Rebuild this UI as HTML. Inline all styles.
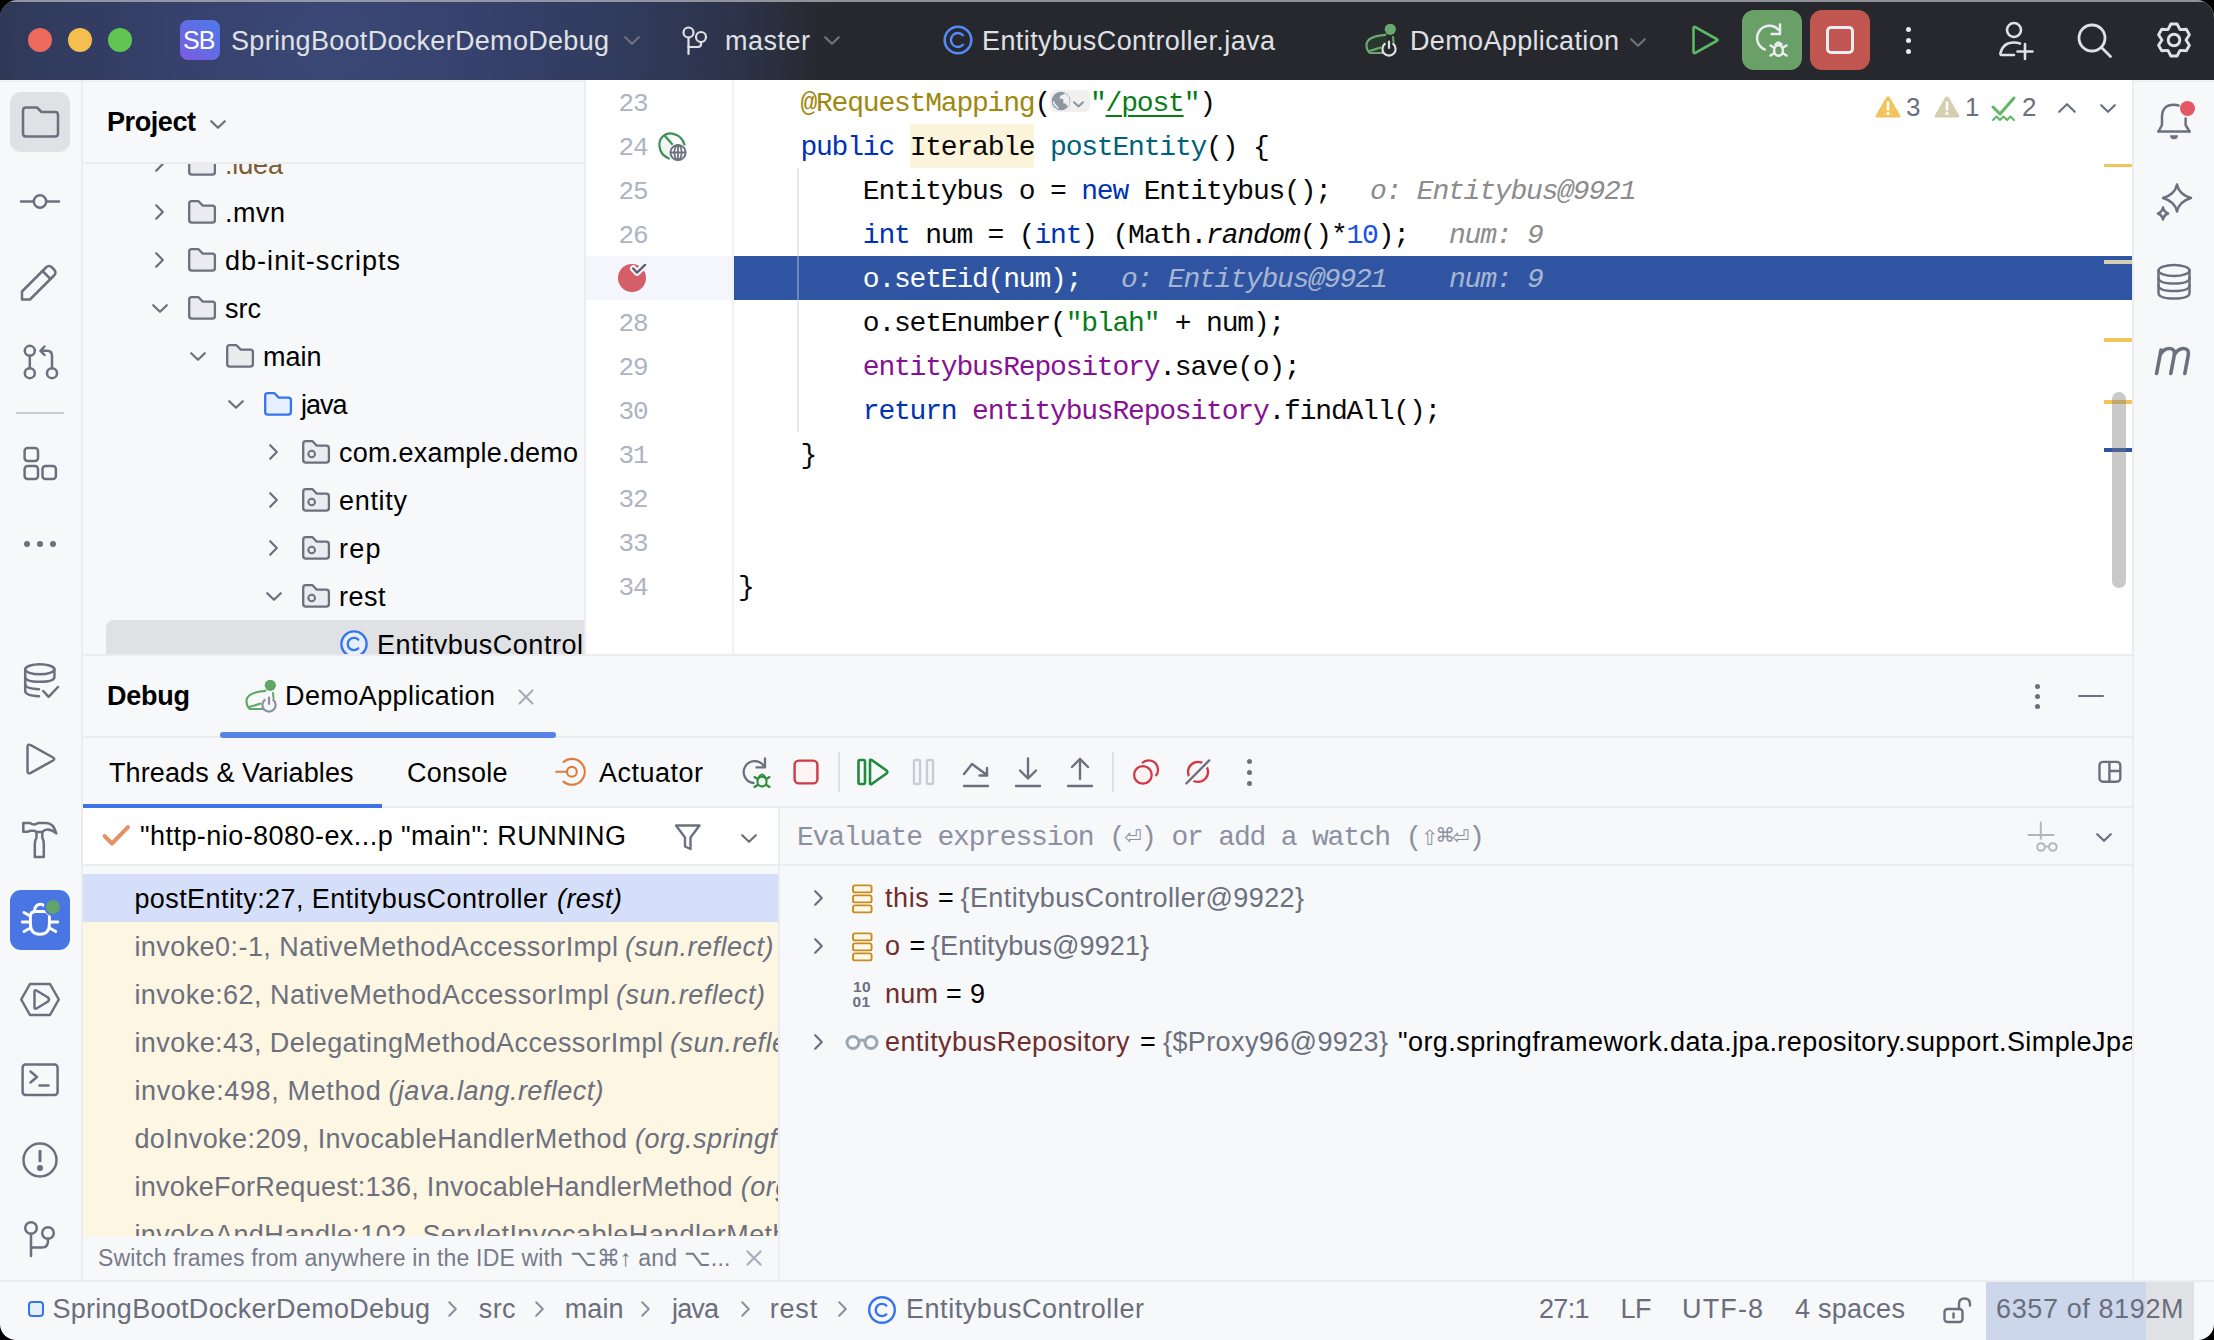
<!DOCTYPE html>
<html><head><meta charset="utf-8"><title>IDE</title>
<style>
*{margin:0;padding:0;box-sizing:border-box}
html,body{width:2214px;height:1340px;overflow:hidden;background:#000}
body{font-family:"Liberation Sans",sans-serif;position:relative}
.a{position:absolute}
.win{position:absolute;left:0;top:0;width:2214px;height:1340px;border-radius:18px 18px 16px 16px;overflow:hidden;background:#f7f8fa}
.t{position:absolute;white-space:nowrap}
svg{position:absolute;overflow:visible}
.clip{position:absolute;overflow:hidden}
</style></head>
<body>
<div class="win">
<div class="a" style="left:0px;top:0px;width:2214px;height:80px;background:#27282e;"></div>
<div class="a" style="left:0px;top:0px;width:1100px;height:80px;background:radial-gradient(circle at 330px 40px,#3b4774 0px,#37426f 130px,#313b5d 290px,#2c3349 410px,#28292f 490px,rgba(39,40,46,0) 540px);"></div>
<div class="a" style="left:0px;top:0px;width:2214px;height:2px;background:rgba(170,172,180,.8);"></div>
<div class="a" style="left:28px;top:28px;width:24px;height:24px;background:#ec6a5e;border-radius:50%"></div>
<div class="a" style="left:68px;top:28px;width:24px;height:24px;background:#f4bf4f;border-radius:50%"></div>
<div class="a" style="left:108px;top:28px;width:24px;height:24px;background:#61c554;border-radius:50%"></div>
<div class="a" style="left:180px;top:20px;width:40px;height:40px;background:linear-gradient(45deg,#7c5be0,#4a7ce9);border-radius:8px"></div>
<div class="t" id="t1" style="left:183px;top:26.88px;font-size:25px;line-height:27.93px;color:#fff;letter-spacing:-0.8px;">SB</div>
<div class="t" id="projname" style="left:231px;top:25.56px;font-size:27px;line-height:30.16px;color:#dfe1e5;letter-spacing:0.305px;">SpringBootDockerDemoDebug</div>
<svg style="left:624px;top:36px;" width="16" height="9" viewBox="0 0 16 9"><path d="M1.2 1.2 L8.0 7.8 L14.8 1.2" fill="none" stroke="#6f737a" stroke-width="2.2" stroke-linecap="round" stroke-linejoin="round"/></svg>
<svg style="left:676px;top:24px;" width="36" height="34" viewBox="0 0 36 34"><g fill="none" stroke="#dfe1e5" stroke-width="2.2" stroke-linecap="round"><circle cx="12.5" cy="8.5" r="5"/><circle cx="25" cy="13" r="5"/><path d="M12.5 13.5 V30"/><path d="M25 18 V20 Q25 23 22 23 H12.5"/></g></svg>
<div class="t" id="master" style="left:725px;top:25.56px;font-size:27px;line-height:30.16px;color:#dfe1e5;letter-spacing:0.495px;">master</div>
<svg style="left:824px;top:36px;" width="16" height="9" viewBox="0 0 16 9"><path d="M1.2 1.2 L8.0 7.8 L14.8 1.2" fill="none" stroke="#6f737a" stroke-width="2.2" stroke-linecap="round" stroke-linejoin="round"/></svg>
<svg style="left:942px;top:24px;" width="32" height="32" viewBox="0 0 32 32"><circle cx="16" cy="16" r="13.3" fill="none" stroke="#548af7" stroke-width="2.6"/><path d="M21 11.2 A7 7 0 1 0 21 20.8" fill="none" stroke="#548af7" stroke-width="2.4" stroke-linecap="round"/></svg>
<div class="t" id="fname" style="left:982px;top:25.56px;font-size:27px;line-height:30.16px;color:#dfe1e5;letter-spacing:0.407px;">EntitybusController.java</div>
<svg style="left:1364px;top:22px;" width="40" height="40" viewBox="0 0 40 40"><path d="M21 13 C12 13.5 2.5 16 2.5 23 C2.5 27 4 29.5 6 31 L19 31 L24 21 Z" fill="#28382c"/><path d="M21.5 12.8 C12 13.5 2.5 16 2.5 23 C2.5 27 4 29.5 6 31 H18.5" fill="none" stroke="#6aa872" stroke-width="2.2" stroke-linecap="round"/><path d="M5 29 Q11 27.5 16.5 25.5" fill="none" stroke="#6aa872" stroke-width="2" stroke-linecap="round"/><circle cx="26.3" cy="7.3" r="5.6" fill="#6aa872"/><path d="M29 15 L29.5 20" stroke="#6aa872" stroke-width="2" stroke-linecap="round"/><path d="M20.76 21.94 A6.6 6.6 0 1 0 29.24 21.94" fill="none" stroke="#e0e1e4" stroke-width="2.2" stroke-linecap="round"/><path d="M25 19.5 V26" stroke="#e0e1e4" stroke-width="2.2" stroke-linecap="round"/></svg>
<div class="t" id="demoapp" style="left:1410px;top:25.56px;font-size:27px;line-height:30.16px;color:#dfe1e5;letter-spacing:0.351px;">DemoApplication</div>
<svg style="left:1630px;top:38px;" width="16" height="9" viewBox="0 0 16 9"><path d="M1.2 1.2 L8.0 7.8 L14.8 1.2" fill="none" stroke="#6f737a" stroke-width="2.2" stroke-linecap="round" stroke-linejoin="round"/></svg>
<svg style="left:1690px;top:24px;" width="32" height="32" viewBox="0 0 32 32"><path d="M3.5 4.5 Q3.5 2 5.8 3.3 L26.5 15 Q28.5 16 26.5 17 L5.8 28.7 Q3.5 30 3.5 27.5 Z" fill="none" stroke="#5fb865" stroke-width="2.6" stroke-linejoin="round"/></svg>
<div class="a" style="left:1742px;top:10px;width:60px;height:60px;background:#6a9f67;border-radius:12px"></div>
<svg style="left:1742px;top:10px;" width="60" height="60" viewBox="0 0 60 60"><g fill="none" stroke="#ebecf0" stroke-width="2.5" stroke-linecap="round" stroke-linejoin="round"><path d="M22.8 39.5 A12.3 12.3 0 1 1 36.5 19.8"/><path d="M38 14.5 V24 H29.5"/><ellipse cx="36.5" cy="40.5" rx="4.4" ry="5.3"/><path d="M33.5 34.5 Q36.5 30.5 39.5 34.5"/><path d="M28.5 35.5 L31.8 37.3 M44.5 35.5 L41.2 37.3 M28.5 45.5 L31.8 43.5 M44.5 45.5 L41.2 43.5"/></g></svg>
<div class="a" style="left:1810px;top:10px;width:60px;height:60px;background:#c0564f;border-radius:12px"></div>
<div class="a" style="left:1826px;top:26px;width:28px;height:28px;background:transparent;border:3px solid #ebecf0;border-radius:5px"></div>
<div class="a" style="left:1905.5px;top:26.5px;width:5px;height:5px;background:#ebecf0;border-radius:50%"></div>
<div class="a" style="left:1905.5px;top:37.5px;width:5px;height:5px;background:#ebecf0;border-radius:50%"></div>
<div class="a" style="left:1905.5px;top:48.5px;width:5px;height:5px;background:#ebecf0;border-radius:50%"></div>
<svg style="left:1994px;top:18px;" width="44" height="44" viewBox="0 0 44 44"><g fill="none" stroke="#dfe1e5" stroke-width="2.6" stroke-linecap="round"><circle cx="20" cy="12" r="7"/><path d="M20 37 H7.5 Q6 37 6.5 35 Q9 24.5 20 24.5 Q23 24.5 26 25.5"/><path d="M31 26 V41 M23.5 33.5 H38.5"/></g></svg>
<svg style="left:2072px;top:20px;" width="44" height="44" viewBox="0 0 44 44"><g fill="none" stroke="#dfe1e5" stroke-width="2.8" stroke-linecap="round"><circle cx="20" cy="18" r="13"/><path d="M29.5 27.5 L38.5 36.5"/></g></svg>
<svg style="left:2152px;top:18px;" width="44" height="44" viewBox="0 0 44 44"><g fill="none" stroke="#dfe1e5" stroke-width="2.9" stroke-linejoin="round"><path d="M16.00 11.61 L18.89 6.00 L25.11 6.00 L28.00 11.61 L34.30 11.31 L37.41 16.69 L34.00 22.00 L37.41 27.31 L34.30 32.69 L28.00 32.39 L25.11 38.00 L18.89 38.00 L16.00 32.39 L9.70 32.69 L6.59 27.31 L10.00 22.00 L6.59 16.69 L9.70 11.31 Z"/><circle cx="22" cy="22" r="5.8"/></g></svg>
<div class="a" style="left:0px;top:80px;width:2214px;height:1px;background:#f3f4f6;"></div>
<div class="a" style="left:0px;top:81px;width:2214px;height:1px;background:#ebecf0;"></div>
<div class="a" style="left:81px;top:80px;width:2px;height:1201px;background:#ebecf0;"></div>
<div class="a" style="left:584px;top:80px;width:2px;height:575px;background:#ebecf0;"></div>
<div class="a" style="left:586px;top:80px;width:1546px;height:575px;background:#fff;"></div>
<div class="a" style="left:2132px;top:80px;width:2px;height:1201px;background:#ebecf0;"></div>
<div class="a" style="left:83px;top:654px;width:2049px;height:2px;background:#ebecf0;"></div>
<div class="a" style="left:83px;top:736px;width:2049px;height:2px;background:#ebecf0;"></div>
<div class="a" style="left:83px;top:806px;width:2049px;height:2px;background:#ebecf0;"></div>
<div class="a" style="left:83px;top:808px;width:695px;height:56px;background:#fff;"></div>
<div class="a" style="left:83px;top:864px;width:2049px;height:2px;background:#ebecf0;"></div>
<div class="a" style="left:778px;top:808px;width:2px;height:473px;background:#ebecf0;"></div>
<div class="a" style="left:0px;top:1280px;width:2214px;height:2px;background:#ebecf0;"></div>
<div class="a" style="left:10px;top:92px;width:60px;height:60px;background:#dfe1e5;border-radius:11px"></div>
<svg style="left:18px;top:100px;" width="44" height="44" viewBox="0 0 44 44"><path d="M5 10.5 Q5 7.5 8 7.5 H19 L23.5 12 H37 Q40 12 40 15 V33.5 Q40 36.5 37 36.5 H8 Q5 36.5 5 33.5 Z" fill="none" stroke="#6c707e" stroke-width="2.5" stroke-linecap="round" stroke-linejoin="round"/></svg>
<svg style="left:18px;top:180px;" width="44" height="44" viewBox="0 0 44 44"><g fill="none" stroke="#6c707e" stroke-width="2.5" stroke-linecap="round" stroke-linejoin="round"><circle cx="22" cy="21.5" r="6.2"/><path d="M3 21.5 H15.8 M28.2 21.5 H41"/></g></svg>
<svg style="left:18px;top:260px;" width="44" height="44" viewBox="0 0 44 44"><g fill="none" stroke="#6c707e" stroke-width="2.5" stroke-linecap="round" stroke-linejoin="round"><path d="M4 38.5 V31.5 L28 7.5 Q31 4.5 34 7.5 L36 9.5 Q39 12.5 36 15.5 L12 39.5 H4 Z"/><path d="M24.5 11 L32.5 19"/></g></svg>
<svg style="left:18px;top:340px;" width="44" height="44" viewBox="0 0 44 44"><g fill="none" stroke="#6c707e" stroke-width="2.5" stroke-linecap="round" stroke-linejoin="round"><circle cx="11.8" cy="10.8" r="5"/><circle cx="11.8" cy="33.2" r="5"/><circle cx="34" cy="33.2" r="5"/><path d="M11.8 15.8 V28.2"/><path d="M34 28.2 V16 Q34 10.8 29 10.8 H23"/><path d="M26.5 6.5 L22.5 10.8 L26.5 15"/></g></svg>
<div class="a" style="left:16px;top:412px;width:48px;height:2px;background:#c9ccd6;"></div>
<svg style="left:18px;top:440px;" width="44" height="44" viewBox="0 0 44 44"><g fill="none" stroke="#6c707e" stroke-width="2.5" stroke-linecap="round" stroke-linejoin="round"><rect x="6.6" y="8" width="13.4" height="13" rx="3"/><rect x="6.6" y="26" width="13.4" height="13" rx="3"/><rect x="24.5" y="26" width="13.4" height="13" rx="3"/></g></svg>
<div class="a" style="left:24px;top:540.7px;width:6px;height:6px;background:#6c707e;border-radius:50%"></div>
<div class="a" style="left:37px;top:540.7px;width:6px;height:6px;background:#6c707e;border-radius:50%"></div>
<div class="a" style="left:50px;top:540.7px;width:6px;height:6px;background:#6c707e;border-radius:50%"></div>
<svg style="left:18px;top:658px;" width="44" height="44" viewBox="0 0 44 44"><g fill="none" stroke="#6c707e" stroke-width="2.5" stroke-linecap="round" stroke-linejoin="round"><ellipse cx="21.8" cy="11.3" rx="14.6" ry="5"/><path d="M7.2 11.3 V33 Q7.2 37.6 21 38.2"/><path d="M36.4 11.3 V19 Q36.4 23.8 21.8 23.8 Q7.2 23.8 7.2 19"/><path d="M7.2 26.2 Q7.2 30.6 21 31.2"/><path d="M25.2 33 L30.6 38.8 L40 29"/></g></svg>
<svg style="left:18px;top:738px;" width="44" height="44" viewBox="0 0 44 44"><path d="M9.5 9 Q9.5 5.5 12.8 7.2 L35 19.5 Q37.5 21 35 22.5 L12.8 34.8 Q9.5 36.5 9.5 33 Z" fill="none" stroke="#6c707e" stroke-width="2.5" stroke-linecap="round" stroke-linejoin="round"/></svg>
<svg style="left:18px;top:818px;" width="44" height="44" viewBox="0 0 44 44"><g fill="none" stroke="#6c707e" stroke-width="2.5" stroke-linecap="round" stroke-linejoin="round"><path d="M5.3 5 H12 Q14 6.5 16 6.5 Q18 6.5 20 5 H28 Q35.5 5 38.3 15.4 Q34 11.5 29.5 11.5 Q26.5 11.5 24.3 14 H18.5 Q17 12.8 15.5 12.8 H12 Q10.5 13.8 9 13.8 H5.3 Z"/><path d="M18.5 14 V19.5 Q16.8 22.5 16.8 26.5 V39 H25.8 V26.5 Q25.8 22.5 24.3 19.5 V14"/></g></svg>
<div class="a" style="left:10px;top:890px;width:60px;height:60px;background:#4a76e4;border-radius:11px"></div>
<svg style="left:18px;top:898px;" width="44" height="44" viewBox="0 0 44 44"><g fill="none" stroke="#fff" stroke-width="2.9" stroke-linecap="round" stroke-linejoin="round"><path d="M31.4 18.5 V25.5 Q31.4 36.3 21.9 36.3 Q12.4 36.3 12.4 25.5 V18.5 Q12.4 13.5 17.2 13.5 H26.2 Q28.5 13.5 30 15.5"/><path d="M16.6 12 Q17.6 6.2 22.5 6.2 Q24.6 6.2 25.8 7.4"/><path d="M4.3 24 H12.4 M31.4 24 H39.7 M6 14.5 L12.2 18 M6 33.5 L12.4 30 M37.8 33.5 L31.6 30"/></g></svg>
<div class="a" style="left:45.8px;top:899.5px;width:14px;height:14px;background:#62a36c;border-radius:50%;box-shadow:0 0 0 2px #4a76e4"></div>
<svg style="left:18px;top:978px;" width="44" height="44" viewBox="0 0 44 44"><g fill="none" stroke="#6c707e" stroke-width="2.5" stroke-linecap="round" stroke-linejoin="round"><path d="M12 6 H32 L40.8 21.5 L32 37 H12 L3.2 21.5 Z"/><path d="M16.5 13.5 Q16.5 11.5 18.5 12.5 L30 19.5 Q32 21.5 30 23.5 L18.5 30.5 Q16.5 31.5 16.5 29.5 Z"/></g></svg>
<svg style="left:18px;top:1058px;" width="44" height="44" viewBox="0 0 44 44"><g fill="none" stroke="#6c707e" stroke-width="2.5" stroke-linecap="round" stroke-linejoin="round"><rect x="4.6" y="6.5" width="35" height="30.5" rx="3"/><path d="M12.5 13.5 L19 19 L12.5 24.5"/><path d="M21.5 27.5 H30.5"/></g></svg>
<svg style="left:18px;top:1138px;" width="44" height="44" viewBox="0 0 44 44"><g fill="none" stroke="#6c707e" stroke-width="2.5" stroke-linecap="round" stroke-linejoin="round"><circle cx="22" cy="22" r="16.5"/><path d="M22 13.2 V22.8" stroke-width="3"/></g></svg>
<div class="a" style="left:37.2px;top:1165.2px;width:5.6px;height:5.6px;background:#6c707e;border-radius:50%"></div>
<svg style="left:18px;top:1212px;" width="44" height="44" viewBox="0 0 44 44"><g fill="none" stroke="#6c707e" stroke-width="2.5" stroke-linecap="round" stroke-linejoin="round"><circle cx="13" cy="16" r="5.8"/><circle cx="30" cy="21" r="5.8"/><path d="M13 21.8 V44"/><path d="M30 26.8 V29 Q30 35.5 24 35.5 H13"/></g></svg>
<svg style="left:2152px;top:98px;" width="44" height="44" viewBox="0 0 44 44"><g fill="none" stroke="#6c707e" stroke-width="2.5" stroke-linecap="round" stroke-linejoin="round"><path d="M6.5 33.5 L10 27 V19 Q10 6.8 22 6.8 Q24.5 6.8 26.5 7.5"/><path d="M33.6 20.5 V27 L37.5 33.5"/><path d="M6.5 33.5 H37.5"/></g><path d="M18 37.2 A4 4 0 0 0 26 37.2 Z" fill="#6c707e"/></svg>
<div class="a" style="left:2179.7px;top:101px;width:15px;height:15px;background:#e55765;border-radius:50%"></div>
<svg style="left:2152px;top:178px;" width="44" height="44" viewBox="0 0 44 44"><g fill="none" stroke="#6c707e" stroke-width="2.5" stroke-linecap="round" stroke-linejoin="round"><path d="M25 6.5 Q27 16.5 39 20 Q27 23.5 25 33.5 Q23 23.5 11 20 Q23 16.5 25 6.5 Z"/><path d="M11 29.5 Q12 34 16 35.5 Q12 37 11 41.5 Q10 37 6 35.5 Q10 34 11 29.5 Z"/></g></svg>
<svg style="left:2152px;top:260px;" width="44" height="44" viewBox="0 0 44 44"><g fill="none" stroke="#6c707e" stroke-width="2.5" stroke-linecap="round" stroke-linejoin="round"><ellipse cx="22" cy="10.5" rx="15.5" ry="5.5"/><path d="M6.5 10.5 V33 Q6.5 38.5 22 38.5 Q37.5 38.5 37.5 33 V10.5"/><path d="M6.5 18 Q6.5 23.5 22 23.5 Q37.5 23.5 37.5 18"/><path d="M6.5 25.5 Q6.5 31 22 31 Q37.5 31 37.5 25.5"/></g></svg>
<svg style="left:2152px;top:338px;" width="44" height="44" viewBox="0 0 44 44"><path d="M4.6 35.5 L9 12 M8.2 17 Q11.5 10.5 17.5 10.5 Q23.5 10.5 22.2 17.5 L18.8 35.5 M22 17.5 Q25.5 10.5 31.5 10.5 Q37.5 10.5 36.2 17.5 L32.8 35.5" fill="none" stroke="#6c707e" stroke-width="3.6" stroke-linecap="round" stroke-linejoin="round"/></svg>
<div class="a" style="left:83px;top:162px;width:501px;height:2px;background:#ebecf0;"></div>
<div class="t" id="projhdr" style="left:107px;top:107.06px;font-size:27px;line-height:30.16px;color:#000;font-weight:700;letter-spacing:-0.424px;">Project</div>
<svg style="left:210px;top:120px;" width="16" height="9" viewBox="0 0 16 9"><path d="M1.2 1.2 L8.0 7.8 L14.8 1.2" fill="none" stroke="#6c707e" stroke-width="2.2" stroke-linecap="round" stroke-linejoin="round"/></svg>
<div class="clip" style="left:83px;top:164px;width:501px;height:490px"><div class="a" style="left:-83px;top:-164px;width:2214px;height:1340px">
<div class="a" style="left:106px;top:620px;width:478px;height:48px;background:#dfe1e5;border-radius:8px 0 0 8px"></div>
<svg style="left:154.5px;top:156px;" width="9" height="16" viewBox="0 0 9 16"><path d="M1.2 1.2 L7.8 8.0 L1.2 14.8" fill="none" stroke="#6c707e" stroke-width="2.2" stroke-linecap="round" stroke-linejoin="round"/></svg>
<svg style="left:188px;top:152px;" width="28" height="24" viewBox="0 0 28 24"><path d="M1.2 3.8 Q1.2 1.2 3.8 1.2 H10.5 L14.8 5.6 H24.3 Q26.9 5.6 26.9 8.2 V20 Q26.9 22.6 24.3 22.6 H3.8 Q1.2 22.6 1.2 20 Z" fill="#ebecf0" stroke="#6c707e" stroke-width="2.3" stroke-linejoin="round"/></svg>
<div class="t" id="tree0" style="left:225px;top:149.56px;font-size:27px;line-height:30.16px;color:#7d5c31;letter-spacing:-0.133px;">.idea</div>
<svg style="left:154.5px;top:204px;" width="9" height="16" viewBox="0 0 9 16"><path d="M1.2 1.2 L7.8 8.0 L1.2 14.8" fill="none" stroke="#6c707e" stroke-width="2.2" stroke-linecap="round" stroke-linejoin="round"/></svg>
<svg style="left:188px;top:200px;" width="28" height="24" viewBox="0 0 28 24"><path d="M1.2 3.8 Q1.2 1.2 3.8 1.2 H10.5 L14.8 5.6 H24.3 Q26.9 5.6 26.9 8.2 V20 Q26.9 22.6 24.3 22.6 H3.8 Q1.2 22.6 1.2 20 Z" fill="#ebecf0" stroke="#6c707e" stroke-width="2.3" stroke-linejoin="round"/></svg>
<div class="t" id="tree1" style="left:225px;top:197.56px;font-size:27px;line-height:30.16px;color:#000;letter-spacing:0.502px;">.mvn</div>
<svg style="left:154.5px;top:252px;" width="9" height="16" viewBox="0 0 9 16"><path d="M1.2 1.2 L7.8 8.0 L1.2 14.8" fill="none" stroke="#6c707e" stroke-width="2.2" stroke-linecap="round" stroke-linejoin="round"/></svg>
<svg style="left:188px;top:248px;" width="28" height="24" viewBox="0 0 28 24"><path d="M1.2 3.8 Q1.2 1.2 3.8 1.2 H10.5 L14.8 5.6 H24.3 Q26.9 5.6 26.9 8.2 V20 Q26.9 22.6 24.3 22.6 H3.8 Q1.2 22.6 1.2 20 Z" fill="#ebecf0" stroke="#6c707e" stroke-width="2.3" stroke-linejoin="round"/></svg>
<div class="t" id="tree2" style="left:225px;top:245.56px;font-size:27px;line-height:30.16px;color:#000;letter-spacing:1.033px;">db-init-scripts</div>
<svg style="left:152px;top:303.5px;" width="16" height="9" viewBox="0 0 16 9"><path d="M1.2 1.2 L8.0 7.8 L14.8 1.2" fill="none" stroke="#6c707e" stroke-width="2.2" stroke-linecap="round" stroke-linejoin="round"/></svg>
<svg style="left:188px;top:296px;" width="28" height="24" viewBox="0 0 28 24"><path d="M1.2 3.8 Q1.2 1.2 3.8 1.2 H10.5 L14.8 5.6 H24.3 Q26.9 5.6 26.9 8.2 V20 Q26.9 22.6 24.3 22.6 H3.8 Q1.2 22.6 1.2 20 Z" fill="#ebecf0" stroke="#6c707e" stroke-width="2.3" stroke-linejoin="round"/></svg>
<div class="t" id="tree3" style="left:225px;top:293.56px;font-size:27px;line-height:30.16px;color:#000;letter-spacing:0.004px;">src</div>
<svg style="left:190px;top:351.5px;" width="16" height="9" viewBox="0 0 16 9"><path d="M1.2 1.2 L8.0 7.8 L14.8 1.2" fill="none" stroke="#6c707e" stroke-width="2.2" stroke-linecap="round" stroke-linejoin="round"/></svg>
<svg style="left:226px;top:344px;" width="28" height="24" viewBox="0 0 28 24"><path d="M1.2 3.8 Q1.2 1.2 3.8 1.2 H10.5 L14.8 5.6 H24.3 Q26.9 5.6 26.9 8.2 V20 Q26.9 22.6 24.3 22.6 H3.8 Q1.2 22.6 1.2 20 Z" fill="#ebecf0" stroke="#6c707e" stroke-width="2.3" stroke-linejoin="round"/></svg>
<div class="t" id="tree4" style="left:263px;top:341.56px;font-size:27px;line-height:30.16px;color:#000;letter-spacing:-0.002px;">main</div>
<svg style="left:228px;top:399.5px;" width="16" height="9" viewBox="0 0 16 9"><path d="M1.2 1.2 L8.0 7.8 L14.8 1.2" fill="none" stroke="#6c707e" stroke-width="2.2" stroke-linecap="round" stroke-linejoin="round"/></svg>
<svg style="left:264px;top:392px;" width="28" height="24" viewBox="0 0 28 24"><path d="M1.2 3.8 Q1.2 1.2 3.8 1.2 H10.5 L14.8 5.6 H24.3 Q26.9 5.6 26.9 8.2 V20 Q26.9 22.6 24.3 22.6 H3.8 Q1.2 22.6 1.2 20 Z" fill="#e7effd" stroke="#3574f0" stroke-width="2.3" stroke-linejoin="round"/></svg>
<div class="t" id="tree5" style="left:301px;top:389.56px;font-size:27px;line-height:30.16px;color:#000;letter-spacing:-1.005px;">java</div>
<svg style="left:268.5px;top:444px;" width="9" height="16" viewBox="0 0 9 16"><path d="M1.2 1.2 L7.8 8.0 L1.2 14.8" fill="none" stroke="#6c707e" stroke-width="2.2" stroke-linecap="round" stroke-linejoin="round"/></svg>
<svg style="left:302px;top:440px;" width="28" height="24" viewBox="0 0 28 24"><path d="M1.2 3.8 Q1.2 1.2 3.8 1.2 H10.5 L14.8 5.6 H24.3 Q26.9 5.6 26.9 8.2 V20 Q26.9 22.6 24.3 22.6 H3.8 Q1.2 22.6 1.2 20 Z" fill="#ebecf0" stroke="#6c707e" stroke-width="2.3" stroke-linejoin="round"/><circle cx="9.7" cy="14" r="3.3" fill="none" stroke="#6c707e" stroke-width="2"/></svg>
<div class="t" id="tree6" style="left:339px;top:437.56px;font-size:27px;line-height:30.16px;color:#000;letter-spacing:0.227px;">com.example.demo</div>
<svg style="left:268.5px;top:492px;" width="9" height="16" viewBox="0 0 9 16"><path d="M1.2 1.2 L7.8 8.0 L1.2 14.8" fill="none" stroke="#6c707e" stroke-width="2.2" stroke-linecap="round" stroke-linejoin="round"/></svg>
<svg style="left:302px;top:488px;" width="28" height="24" viewBox="0 0 28 24"><path d="M1.2 3.8 Q1.2 1.2 3.8 1.2 H10.5 L14.8 5.6 H24.3 Q26.9 5.6 26.9 8.2 V20 Q26.9 22.6 24.3 22.6 H3.8 Q1.2 22.6 1.2 20 Z" fill="#ebecf0" stroke="#6c707e" stroke-width="2.3" stroke-linejoin="round"/><circle cx="9.7" cy="14" r="3.3" fill="none" stroke="#6c707e" stroke-width="2"/></svg>
<div class="t" id="tree7" style="left:339px;top:485.56px;font-size:27px;line-height:30.16px;color:#000;letter-spacing:0.693px;">entity</div>
<svg style="left:268.5px;top:540px;" width="9" height="16" viewBox="0 0 9 16"><path d="M1.2 1.2 L7.8 8.0 L1.2 14.8" fill="none" stroke="#6c707e" stroke-width="2.2" stroke-linecap="round" stroke-linejoin="round"/></svg>
<svg style="left:302px;top:536px;" width="28" height="24" viewBox="0 0 28 24"><path d="M1.2 3.8 Q1.2 1.2 3.8 1.2 H10.5 L14.8 5.6 H24.3 Q26.9 5.6 26.9 8.2 V20 Q26.9 22.6 24.3 22.6 H3.8 Q1.2 22.6 1.2 20 Z" fill="#ebecf0" stroke="#6c707e" stroke-width="2.3" stroke-linejoin="round"/><circle cx="9.7" cy="14" r="3.3" fill="none" stroke="#6c707e" stroke-width="2"/></svg>
<div class="t" id="tree8" style="left:339px;top:533.57px;font-size:27px;line-height:30.16px;color:#000;letter-spacing:1.246px;">rep</div>
<svg style="left:266px;top:591.5px;" width="16" height="9" viewBox="0 0 16 9"><path d="M1.2 1.2 L8.0 7.8 L14.8 1.2" fill="none" stroke="#6c707e" stroke-width="2.2" stroke-linecap="round" stroke-linejoin="round"/></svg>
<svg style="left:302px;top:584px;" width="28" height="24" viewBox="0 0 28 24"><path d="M1.2 3.8 Q1.2 1.2 3.8 1.2 H10.5 L14.8 5.6 H24.3 Q26.9 5.6 26.9 8.2 V20 Q26.9 22.6 24.3 22.6 H3.8 Q1.2 22.6 1.2 20 Z" fill="#ebecf0" stroke="#6c707e" stroke-width="2.3" stroke-linejoin="round"/><circle cx="9.7" cy="14" r="3.3" fill="none" stroke="#6c707e" stroke-width="2"/></svg>
<div class="t" id="tree9" style="left:339px;top:581.57px;font-size:27px;line-height:30.16px;color:#000;letter-spacing:0.498px;">rest</div>
<svg style="left:340px;top:630px;" width="28" height="28" viewBox="0 0 28 28"><circle cx="14" cy="14" r="12.6" fill="#e7effd" stroke="#3574f0" stroke-width="2.4"/><path d="M18.3 9.6 A6.2 6.2 0 1 0 18.3 18.4" fill="none" stroke="#3574f0" stroke-width="2.3" stroke-linecap="round"/></svg>
<div class="t" id="tree10" style="left:377px;top:629.57px;font-size:27px;line-height:30.16px;color:#000;letter-spacing:0.527px;">EntitybusControl</div>
</div></div>
<div class="clip" style="left:586px;top:80px;width:1546px;height:574px"><div class="a" style="left:-586px;top:-80px;width:2214px;height:1340px">
<div class="a" style="left:732px;top:80px;width:2px;height:574px;background:#f0f1f4;"></div>
<div class="a" style="left:586px;top:256px;width:146px;height:44px;background:#f4f6fb;"></div>
<div class="a" style="left:734px;top:256px;width:1398px;height:44px;background:#2f55a2;"></div>
<div class="a" style="left:796.5px;top:168px;width:2px;height:264px;background:#e8e9ed;"></div>
<div class="a" style="left:796.5px;top:256px;width:2px;height:44px;background:#6f86ba;"></div>
<div class="a" style="left:909.6px;top:124px;width:124.8px;height:44px;background:#fcf5dc;"></div>
<div class="a" style="left:1050px;top:90px;width:40px;height:22px;background:#f0f0f1;border-radius:6px"></div>
<svg style="left:1050px;top:90px;" width="40" height="22" viewBox="0 0 40 22"><circle cx="11" cy="11" r="9.3" fill="#8e96a0"/><path d="M14.5 3.2 Q17 4 18.5 6.5 Q20.5 10 19.5 14 Q18.5 17 17 16 L16 13.5 L13.5 13.5 L13.2 9 L9.5 8.5 L10.5 5.5 Q13 5.5 14.5 3.2 Z" fill="#f0f0f1"/><path d="M2.5 11.5 Q4 17 9.5 19.5 L8 17 Q5 14.5 4 11 Z" fill="#f0f0f1"/><path d="M24 12.2 L28.5 16.4 L33 12.2" fill="none" stroke="#8c959e" stroke-width="2" stroke-linecap="round" stroke-linejoin="round"/></svg>
<div class="t" id="t2" style="left:800.4px;top:88.38px;font-size:28px;line-height:31.72px;color:#000;font-family:'Liberation Mono',monospace;letter-spacing:-1.2px;"><span style="color:#9e880d;">@RequestMapping</span><span style="color:#080808;">(</span></div>
<div class="t" id="t3" style="left:1090.0px;top:88.38px;font-size:28px;line-height:31.72px;color:#000;font-family:'Liberation Mono',monospace;letter-spacing:-1.2px;"><span style="color:#067d17;">&quot;</span><span style="color:#067d17;text-decoration:underline;text-decoration-thickness:2px;text-underline-offset:4px;">/post</span><span style="color:#067d17;">&quot;</span><span style="color:#080808;">)</span></div>
<div class="t" id="t4" style="left:800.4px;top:132.38px;font-size:28px;line-height:31.72px;color:#000;font-family:'Liberation Mono',monospace;letter-spacing:-1.2px;"><span style="color:#0033b3;">public</span><span style="color:#080808;"> </span><span style="color:#080808;">Iterable</span><span style="color:#080808;"> </span><span style="color:#00627a;">postEntity</span><span style="color:#080808;">() {</span></div>
<div class="t" id="t5" style="left:862.8px;top:176.38px;font-size:28px;line-height:31.72px;color:#000;font-family:'Liberation Mono',monospace;letter-spacing:-1.2px;"><span style="color:#080808;">Entitybus o = </span><span style="color:#0033b3;">new</span><span style="color:#080808;"> Entitybus();</span></div>
<div class="t" id="t6" style="left:1370px;top:176.38px;font-size:28px;line-height:31.72px;color:#8c8c8c;font-style:italic;font-family:'Liberation Mono',monospace;letter-spacing:-1.2px;">o: Entitybus@9921</div>
<div class="t" id="t7" style="left:862.8px;top:220.38px;font-size:28px;line-height:31.72px;color:#000;font-family:'Liberation Mono',monospace;letter-spacing:-1.2px;"><span style="color:#0033b3;">int</span><span style="color:#080808;"> num = (</span><span style="color:#0033b3;">int</span><span style="color:#080808;">) (Math.</span><span style="color:#080808;font-style:italic;">random</span><span style="color:#080808;">()*</span><span style="color:#1750eb;">10</span><span style="color:#080808;">);</span></div>
<div class="t" id="t8" style="left:1449px;top:220.38px;font-size:28px;line-height:31.72px;color:#8c8c8c;font-style:italic;font-family:'Liberation Mono',monospace;letter-spacing:-1.2px;">num: 9</div>
<div class="t" id="t9" style="left:862.8px;top:264.38px;font-size:28px;line-height:31.72px;color:#000;font-family:'Liberation Mono',monospace;letter-spacing:-1.2px;"><span style="color:#ffffff;">o.setEid(num);</span></div>
<div class="t" id="t10" style="left:1121px;top:264.38px;font-size:28px;line-height:31.72px;color:#a7b5d3;font-style:italic;font-family:'Liberation Mono',monospace;letter-spacing:-1.2px;">o: Entitybus@9921</div>
<div class="t" id="t11" style="left:1449px;top:264.38px;font-size:28px;line-height:31.72px;color:#a7b5d3;font-style:italic;font-family:'Liberation Mono',monospace;letter-spacing:-1.2px;">num: 9</div>
<div class="t" id="t12" style="left:862.8px;top:308.38px;font-size:28px;line-height:31.72px;color:#000;font-family:'Liberation Mono',monospace;letter-spacing:-1.2px;"><span style="color:#080808;">o.setEnumber(</span><span style="color:#067d17;">&quot;blah&quot;</span><span style="color:#080808;"> + num);</span></div>
<div class="t" id="t13" style="left:862.8px;top:352.38px;font-size:28px;line-height:31.72px;color:#000;font-family:'Liberation Mono',monospace;letter-spacing:-1.2px;"><span style="color:#871094;">entitybusRepository</span><span style="color:#080808;">.save(o);</span></div>
<div class="t" id="t14" style="left:862.8px;top:396.38px;font-size:28px;line-height:31.72px;color:#000;font-family:'Liberation Mono',monospace;letter-spacing:-1.2px;"><span style="color:#0033b3;">return</span><span style="color:#080808;"> </span><span style="color:#871094;">entitybusRepository</span><span style="color:#080808;">.findAll();</span></div>
<div class="t" id="t15" style="left:800.4px;top:440.38px;font-size:28px;line-height:31.72px;color:#000;font-family:'Liberation Mono',monospace;letter-spacing:-1.2px;"><span style="color:#080808;">}</span></div>
<div class="t" id="t16" style="left:738.0px;top:572.38px;font-size:28px;line-height:31.72px;color:#000;font-family:'Liberation Mono',monospace;letter-spacing:-1.2px;"><span style="color:#080808;">}</span></div>
<div class="t" id="t17" style="left:618.5px;top:89.54px;font-size:26px;line-height:29.46px;color:#aeb3c2;font-family:'Liberation Mono',monospace;letter-spacing:-1.2px;">23</div>
<div class="t" id="t18" style="left:618.5px;top:133.54px;font-size:26px;line-height:29.46px;color:#aeb3c2;font-family:'Liberation Mono',monospace;letter-spacing:-1.2px;">24</div>
<div class="t" id="t19" style="left:618.5px;top:177.54px;font-size:26px;line-height:29.46px;color:#aeb3c2;font-family:'Liberation Mono',monospace;letter-spacing:-1.2px;">25</div>
<div class="t" id="t20" style="left:618.5px;top:221.54px;font-size:26px;line-height:29.46px;color:#aeb3c2;font-family:'Liberation Mono',monospace;letter-spacing:-1.2px;">26</div>
<div class="t" id="t21" style="left:618.5px;top:309.54px;font-size:26px;line-height:29.46px;color:#aeb3c2;font-family:'Liberation Mono',monospace;letter-spacing:-1.2px;">28</div>
<div class="t" id="t22" style="left:618.5px;top:353.54px;font-size:26px;line-height:29.46px;color:#aeb3c2;font-family:'Liberation Mono',monospace;letter-spacing:-1.2px;">29</div>
<div class="t" id="t23" style="left:618.5px;top:397.54px;font-size:26px;line-height:29.46px;color:#aeb3c2;font-family:'Liberation Mono',monospace;letter-spacing:-1.2px;">30</div>
<div class="t" id="t24" style="left:618.5px;top:441.54px;font-size:26px;line-height:29.46px;color:#aeb3c2;font-family:'Liberation Mono',monospace;letter-spacing:-1.2px;">31</div>
<div class="t" id="t25" style="left:618.5px;top:485.54px;font-size:26px;line-height:29.46px;color:#aeb3c2;font-family:'Liberation Mono',monospace;letter-spacing:-1.2px;">32</div>
<div class="t" id="t26" style="left:618.5px;top:529.54px;font-size:26px;line-height:29.46px;color:#aeb3c2;font-family:'Liberation Mono',monospace;letter-spacing:-1.2px;">33</div>
<div class="t" id="t27" style="left:618.5px;top:573.54px;font-size:26px;line-height:29.46px;color:#aeb3c2;font-family:'Liberation Mono',monospace;letter-spacing:-1.2px;">34</div>
<svg style="left:656px;top:130px;" width="34" height="34" viewBox="0 0 34 34"><path d="M17 3.8 C9 2 2.5 8 3.5 16.5 C4.2 22.5 8 26.5 12.8 28.5" fill="#eff7f0" stroke="#3d8f58" stroke-width="2.2" stroke-linecap="round"/><path d="M8.5 5.5 L16.5 14.5" stroke="#3d8f58" stroke-width="2.2" stroke-linecap="round"/><path d="M17 3.8 C23 5 27.5 9.5 28.5 15" fill="none" stroke="#3d8f58" stroke-width="2.2" stroke-linecap="round"/><circle cx="22" cy="22.5" r="9.6" fill="#fff"/><circle cx="22" cy="22.5" r="7.6" fill="none" stroke="#6c707e" stroke-width="2"/><path d="M14.4 22.5 H29.6 M22 14.9 V30.1" stroke="#6c707e" stroke-width="1.8"/><ellipse cx="22" cy="22.5" rx="3.6" ry="7.6" fill="none" stroke="#6c707e" stroke-width="1.8"/></svg>
<div class="a" style="left:618px;top:264px;width:28px;height:28px;background:#d55f69;border-radius:50%"></div>
<svg style="left:628px;top:258px;" width="24" height="20" viewBox="0 0 24 20"><path d="M5.2 10.5 L9 14.6 L17 6.9" fill="none" stroke="#f5f7fc" stroke-width="6.4" stroke-linecap="round" stroke-linejoin="round"/><path d="M5.2 10.5 L9 14.6 L17 6.9" fill="none" stroke="#5e6270" stroke-width="2.4" stroke-linecap="round" stroke-linejoin="round"/></svg>
</div></div>
<svg style="left:1874px;top:94px;" width="28" height="26" viewBox="0 0 28 26"><path d="M14 2.5 Q15.3 2.5 16 3.8 L26.3 21.5 Q27 23.5 25 23.5 H3 Q1 23.5 1.7 21.5 L12 3.8 Q12.7 2.5 14 2.5 Z" fill="#f2c55c"/><path d="M14 8.5 V15.5" stroke="#fff" stroke-width="2.6" stroke-linecap="round"/><circle cx="14" cy="19.5" r="1.6" fill="#fff"/></svg>
<div class="t" id="warn3" style="left:1906px;top:92.97px;font-size:26px;line-height:29.04px;color:#6c707e;letter-spacing:-2.0px;">3</div>
<svg style="left:1933px;top:94px;" width="28" height="26" viewBox="0 0 28 26"><path d="M14 2.5 Q15.3 2.5 16 3.8 L26.3 21.5 Q27 23.5 25 23.5 H3 Q1 23.5 1.7 21.5 L12 3.8 Q12.7 2.5 14 2.5 Z" fill="#d6ceb0"/><path d="M14 8.5 V15.5" stroke="#fff" stroke-width="2.6" stroke-linecap="round"/><circle cx="14" cy="19.5" r="1.6" fill="#fff"/></svg>
<div class="t" id="warn1" style="left:1965px;top:92.97px;font-size:26px;line-height:29.04px;color:#6c707e;letter-spacing:-4.0px;">1</div>
<svg style="left:1990px;top:94px;" width="30" height="30" viewBox="0 0 30 30"><path d="M3 13 L10 20 L24 4" fill="none" stroke="#5fb865" stroke-width="3" stroke-linecap="round" stroke-linejoin="round"/><path d="M3 26 L6.5 22.5 L10 26 L13.5 22.5 L17 26 L20.5 22.5 L24 26" fill="none" stroke="#5fb865" stroke-width="2" stroke-linecap="round" stroke-linejoin="round"/></svg>
<div class="t" id="warn2" style="left:2022px;top:92.97px;font-size:26px;line-height:29.04px;color:#6c707e;letter-spacing:0.0px;">2</div>
<svg style="left:2058px;top:103px;" width="18" height="10" viewBox="0 0 18 10"><path d="M1.2 8.8 L9 1.2 L16.8 8.8" fill="none" stroke="#6c707e" stroke-width="2.2" stroke-linecap="round" stroke-linejoin="round"/></svg>
<svg style="left:2100px;top:104px;" width="16" height="9" viewBox="0 0 16 9"><path d="M1.2 1.2 L8.0 7.8 L14.8 1.2" fill="none" stroke="#6c707e" stroke-width="2.2" stroke-linecap="round" stroke-linejoin="round"/></svg>
<div class="a" style="left:2104px;top:164px;width:28px;height:3px;background:#f2c55c;"></div>
<div class="a" style="left:2104px;top:260px;width:28px;height:4px;background:#d6ceb0;"></div>
<div class="a" style="left:2104px;top:338px;width:28px;height:4px;background:#f2c55c;"></div>
<div class="a" style="left:2104px;top:400px;width:28px;height:4px;background:#f2c55c;"></div>
<div class="a" style="left:2104px;top:448px;width:28px;height:4px;background:#2f55a2;"></div>
<div class="a" style="left:2112px;top:392px;width:14px;height:196px;background:rgba(120,120,120,.4);border-radius:7px"></div>
<div class="t" id="dbg" style="left:107px;top:681.07px;font-size:27px;line-height:30.16px;color:#000;font-weight:700;letter-spacing:-0.25px;">Debug</div>
<svg style="left:244px;top:678px;" width="40" height="40" viewBox="0 0 40 40"><path d="M21 13 C12 13.5 2.5 16 2.5 23 C2.5 27 4 29.5 6 31 L19 31 L24 21 Z" fill="#f7f8fa"/><path d="M21.5 12.8 C12 13.5 2.5 16 2.5 23 C2.5 27 4 29.5 6 31 H18.5" fill="none" stroke="#5fa866" stroke-width="2.2" stroke-linecap="round"/><path d="M5 29 Q11 27.5 16.5 25.5" fill="none" stroke="#5fa866" stroke-width="2" stroke-linecap="round"/><circle cx="26.3" cy="7.3" r="5.6" fill="#5fa866"/><path d="M29 15 L29.5 20" stroke="#5fa866" stroke-width="2" stroke-linecap="round"/><path d="M20.76 21.94 A6.6 6.6 0 1 0 29.24 21.94" fill="none" stroke="#8c909e" stroke-width="2.2" stroke-linecap="round"/><path d="M25 19.5 V26" stroke="#8c909e" stroke-width="2.2" stroke-linecap="round"/></svg>
<div class="t" id="dbgapp" style="left:285px;top:681.07px;font-size:27px;line-height:30.16px;color:#000;letter-spacing:0.422px;">DemoApplication</div>
<svg style="left:518px;top:689px;" width="16" height="16" viewBox="0 0 16 16"><path d="M1.5 1.5 L14.5 14.5 M14.5 1.5 L1.5 14.5" stroke="#a8adbd" stroke-width="2.2" stroke-linecap="round"/></svg>
<div class="a" style="left:220px;top:732px;width:336px;height:6px;background:#5882e8;border-radius:3px"></div>
<div class="a" style="left:2034.5px;top:683.5px;width:5px;height:5px;background:#6c707e;border-radius:50%"></div>
<div class="a" style="left:2034.5px;top:693.5px;width:5px;height:5px;background:#6c707e;border-radius:50%"></div>
<div class="a" style="left:2034.5px;top:703.5px;width:5px;height:5px;background:#6c707e;border-radius:50%"></div>
<div class="a" style="left:2078px;top:695px;width:26px;height:2.4px;background:#6c707e;border-radius:1px"></div>
<div class="t" id="tv" style="left:109px;top:758.27px;font-size:27px;line-height:30.16px;color:#000;letter-spacing:0.105px;">Threads &amp; Variables</div>
<div class="a" style="left:83px;top:804px;width:299px;height:4px;background:#3d72e8;"></div>
<div class="t" id="console" style="left:407px;top:758.27px;font-size:27px;line-height:30.16px;color:#000;letter-spacing:0.242px;">Console</div>
<svg style="left:552px;top:754px;" width="40" height="36" viewBox="0 0 40 36"><path d="M11.5 8 A12.9 12.9 0 1 1 11.5 27.6" fill="none" stroke="#e07b3c" stroke-width="2.1" stroke-linecap="round"/><circle cx="19.9" cy="17.8" r="4.9" fill="none" stroke="#e07b3c" stroke-width="2.1"/><path d="M4.2 17.8 H15" stroke="#e07b3c" stroke-width="2.1" stroke-linecap="round"/></svg>
<div class="t" id="actuator" style="left:599px;top:758.27px;font-size:27px;line-height:30.16px;color:#000;letter-spacing:0.491px;">Actuator</div>
<svg style="left:738px;top:752px;" width="40" height="40" viewBox="0 0 40 40"><g fill="none" stroke-linecap="round" stroke-linejoin="round"><path d="M15.5 31 A11 11 0 1 1 25.3 13.2" stroke="#6c707e" stroke-width="2.3"/><path d="M27 6.5 V15.4 H18.5" stroke="#6c707e" stroke-width="2.3"/><g stroke="#2f8a3a" stroke-width="2.1"><ellipse cx="24" cy="29.6" rx="4.6" ry="4.9" fill="#f0f7f0"/><path d="M20.6 25.5 Q24 19.5 27.4 25.5"/><path d="M16.5 25 L19.6 27 M31.5 25 L28.4 27 M16.5 35 L19.6 33 M31.5 35 L28.4 33"/></g></g></svg>
<svg style="left:792px;top:758px;" width="28" height="28" viewBox="0 0 28 28"><rect x="2.6" y="2.6" width="22.8" height="22.8" rx="4.2" fill="#fdf3f3" stroke="#cf3a48" stroke-width="2.4"/></svg>
<div class="a" style="left:838px;top:752px;width:2px;height:40px;background:#dfe1e5;"></div>
<svg style="left:856px;top:756px;" width="34" height="32" viewBox="0 0 34 32"><g fill="none" stroke="#208a3c" stroke-width="2.6" stroke-linejoin="round"><rect x="2.5" y="4" width="6.5" height="24" rx="1.5"/><path d="M14 5 Q14 3 16 4.2 L30.5 14.5 Q32 16 30.5 17.5 L16 27.8 Q14 29 14 27 Z"/></g></svg>
<svg style="left:910px;top:756px;" width="28" height="32" viewBox="0 0 28 32"><g fill="none" stroke="#c9ccd6" stroke-width="2.4"><rect x="4" y="4" width="6" height="24" rx="1.5"/><rect x="17" y="4" width="6" height="24" rx="1.5"/></g></svg>
<svg style="left:960px;top:754px;" width="32" height="36" viewBox="0 0 32 36"><g fill="none" stroke="#6c707e" stroke-width="2.4" stroke-linecap="round" stroke-linejoin="round"><path d="M4 20 L12 10 L27 21"/><path d="M27 14 V21.5 H19.5"/><path d="M4 32 H28"/></g></svg>
<svg style="left:1012px;top:754px;" width="32" height="36" viewBox="0 0 32 36"><g fill="none" stroke="#6c707e" stroke-width="2.4" stroke-linecap="round" stroke-linejoin="round"><path d="M16 4.5 V24"/><path d="M8 16.5 L16 24.5 L24 16.5"/><path d="M4 32 H28"/></g></svg>
<svg style="left:1064px;top:754px;" width="32" height="36" viewBox="0 0 32 36"><g fill="none" stroke="#6c707e" stroke-width="2.4" stroke-linecap="round" stroke-linejoin="round"><path d="M16 25 V5"/><path d="M8 13 L16 5 L24 13"/><path d="M4 32 H28"/></g></svg>
<div class="a" style="left:1112px;top:752px;width:2px;height:40px;background:#dfe1e5;"></div>
<svg style="left:1130px;top:756px;" width="34" height="32" viewBox="0 0 34 32"><g fill="#fdf3f3" stroke="#cf3a48" stroke-width="2.3"><path d="M12 7.2 A9 9 0 1 1 25.5 20" fill="none"/><circle cx="12.9" cy="18.9" r="8.8"/></g></svg>
<svg style="left:1182px;top:756px;" width="32" height="32" viewBox="0 0 32 32"><circle cx="16" cy="15.9" r="10" fill="#fdf3f3" stroke="#cf3a48" stroke-width="2.3"/><path d="M4.4 27.4 L27.2 4.4" stroke="#f7f8fa" stroke-width="6.5" stroke-linecap="round"/><path d="M4.4 27.4 L27.2 4.4" stroke="#6c707e" stroke-width="2.3" stroke-linecap="round"/></svg>
<div class="a" style="left:1247px;top:758.5px;width:5px;height:5px;background:#6c707e;border-radius:50%"></div>
<div class="a" style="left:1247px;top:769.5px;width:5px;height:5px;background:#6c707e;border-radius:50%"></div>
<div class="a" style="left:1247px;top:780.5px;width:5px;height:5px;background:#6c707e;border-radius:50%"></div>
<svg style="left:2094px;top:756px;" width="32" height="32" viewBox="0 0 32 32"><g fill="none" stroke="#6c707e" stroke-width="2.4" stroke-linejoin="round"><rect x="5.5" y="5.9" width="20.8" height="19.9" rx="3.5"/><path d="M15.4 5.9 V25.8 M15.4 15 H26.3"/></g></svg>
<svg style="left:100px;top:822px;" width="34" height="28" viewBox="0 0 34 28"><path d="M4.5 14 L12 21.5 L28 5" fill="none" stroke="#e5926a" stroke-width="4" stroke-linecap="round" stroke-linejoin="round"/></svg>
<div class="t" id="thread" style="left:140px;top:821.37px;font-size:27px;line-height:30.16px;color:#000;letter-spacing:0.447px;">&quot;http-nio-8080-ex...p &quot;main&quot;: RUNNING</div>
<svg style="left:672px;top:822px;" width="32" height="30" viewBox="0 0 32 30"><path d="M4 3.5 H27.5 L18.5 15.5 V27 L13 24.5 V15.5 Z" fill="none" stroke="#6c707e" stroke-width="2.4" stroke-linejoin="round"/></svg>
<svg style="left:741px;top:834px;" width="16" height="9" viewBox="0 0 16 9"><path d="M1.2 1.2 L8.0 7.8 L14.8 1.2" fill="none" stroke="#6c707e" stroke-width="2.2" stroke-linecap="round" stroke-linejoin="round"/></svg>
<div class="t" id="t28" style="left:797px;top:821.68px;font-size:28px;line-height:31.72px;color:#8c90a0;font-family:'Liberation Mono',monospace;letter-spacing:-1.2px;">Evaluate expression (⏎) or add a watch (⇧⌘⏎)</div>
<svg style="left:2026px;top:820px;" width="40" height="36" viewBox="0 0 40 36"><g fill="none" stroke="#b4b6bc" stroke-width="2" stroke-linecap="round"><path d="M14.8 2.5 V18.8 M2.4 14.9 H27.6"/><circle cx="15" cy="27" r="3.8"/><circle cx="26.8" cy="27" r="3.8"/><path d="M18.8 26.5 H23"/></g></svg>
<svg style="left:2096px;top:833px;" width="16" height="9" viewBox="0 0 16 9"><path d="M1.2 1.2 L8.0 7.8 L14.8 1.2" fill="none" stroke="#6c707e" stroke-width="2.2" stroke-linecap="round" stroke-linejoin="round"/></svg>
<div class="clip" style="left:83px;top:866px;width:695px;height:370px"><div class="a" style="left:-83px;top:-866px;width:2214px;height:1340px">
<div class="a" style="left:83px;top:874px;width:695px;height:48px;background:#d6dffa;"></div>
<div class="a" style="left:83px;top:922px;width:695px;height:320px;background:#fdf6e2;"></div>
<div class="t" id="fa0" style="left:134.4px;top:883.57px;font-size:27px;line-height:30.16px;color:#000;letter-spacing:0.418px;">postEntity:27, EntitybusController</div>
<div class="t" id="fb0" style="left:557px;top:883.57px;font-size:27px;line-height:30.16px;color:#000;font-style:italic;letter-spacing:0.4px;">(rest)</div>
<div class="t" id="fa1" style="left:134.4px;top:931.57px;font-size:27px;line-height:30.16px;color:#6c707e;letter-spacing:0.44px;">invoke0:-1, NativeMethodAccessorImpl</div>
<div class="t" id="fb1" style="left:625px;top:931.57px;font-size:27px;line-height:30.16px;color:#6c707e;font-style:italic;letter-spacing:0.496px;">(sun.reflect)</div>
<div class="t" id="fa2" style="left:134.4px;top:979.57px;font-size:27px;line-height:30.16px;color:#6c707e;letter-spacing:0.453px;">invoke:62, NativeMethodAccessorImpl</div>
<div class="t" id="fb2" style="left:616px;top:979.57px;font-size:27px;line-height:30.16px;color:#6c707e;font-style:italic;letter-spacing:0.538px;">(sun.reflect)</div>
<div class="t" id="fa3" style="left:134.4px;top:1027.57px;font-size:27px;line-height:30.16px;color:#6c707e;letter-spacing:0.443px;">invoke:43, DelegatingMethodAccessorImpl</div>
<div class="t" id="t29" style="left:670px;top:1027.57px;font-size:27px;line-height:30.16px;color:#6c707e;font-style:italic;letter-spacing:0.5px;">(sun.reflect)</div>
<div class="t" id="fa4" style="left:134.4px;top:1075.57px;font-size:27px;line-height:30.16px;color:#6c707e;letter-spacing:0.627px;">invoke:498, Method</div>
<div class="t" id="fb4" style="left:388.4px;top:1075.57px;font-size:27px;line-height:30.16px;color:#6c707e;font-style:italic;letter-spacing:0.45px;">(java.lang.reflect)</div>
<div class="t" id="fa5" style="left:134.4px;top:1123.57px;font-size:27px;line-height:30.16px;color:#6c707e;letter-spacing:0.437px;">doInvoke:209, InvocableHandlerMethod</div>
<div class="t" id="t30" style="left:635px;top:1123.57px;font-size:27px;line-height:30.16px;color:#6c707e;font-style:italic;letter-spacing:0.5px;">(org.springframework.web.method.support)</div>
<div class="t" id="fa6" style="left:134.4px;top:1171.57px;font-size:27px;line-height:30.16px;color:#6c707e;letter-spacing:0.264px;">invokeForRequest:136, InvocableHandlerMethod</div>
<div class="t" id="t31" style="left:740.7px;top:1171.57px;font-size:27px;line-height:30.16px;color:#6c707e;font-style:italic;letter-spacing:0.5px;">(org.springframework.web.method.support)</div>
<div class="t" id="t32" style="left:134.4px;top:1219.57px;font-size:27px;line-height:30.16px;color:#6c707e;letter-spacing:0.42px;">invokeAndHandle:102, ServletInvocableHandlerMethod</div>
</div></div>
<div class="t" id="tip" style="left:98px;top:1246.38px;font-size:23px;line-height:25.69px;color:#777b89;letter-spacing:0.174px;">Switch frames from anywhere in the IDE with ⌥⌘↑ and ⌥...</div>
<svg style="left:746px;top:1250px;" width="16" height="16" viewBox="0 0 16 16"><path d="M1.5 1.5 L14.5 14.5 M14.5 1.5 L1.5 14.5" stroke="#a8adbd" stroke-width="2.2" stroke-linecap="round"/></svg>
<svg style="left:814px;top:890px;" width="9" height="16" viewBox="0 0 9 16"><path d="M1.2 1.2 L7.8 8.0 L1.2 14.8" fill="none" stroke="#6c707e" stroke-width="2.2" stroke-linecap="round" stroke-linejoin="round"/></svg>
<svg style="left:851px;top:884px;" width="22" height="30" viewBox="0 0 22 30"><rect x="2" y="1.4" width="18.6" height="7" rx="2" fill="#fdf8e8" stroke="#c98a1f" stroke-width="1.9"/><rect x="2" y="11.4" width="18.6" height="7" rx="2" fill="#fdf8e8" stroke="#c98a1f" stroke-width="1.9"/><rect x="2" y="21.4" width="18.6" height="7" rx="2" fill="#fdf8e8" stroke="#c98a1f" stroke-width="1.9"/></svg>
<div class="t" id="v0n" style="left:885px;top:882.57px;font-size:27px;line-height:30.16px;color:#6f2d2d;letter-spacing:0.595px;">this</div>
<div class="t" id="t33" style="left:938px;top:882.57px;font-size:27px;line-height:30.16px;color:#000;">=</div>
<div class="t" id="v0v" style="left:960.5px;top:882.57px;font-size:27px;line-height:30.16px;color:#6c707e;letter-spacing:0.396px;">{EntitybusController@9922}</div>
<svg style="left:814px;top:938px;" width="9" height="16" viewBox="0 0 9 16"><path d="M1.2 1.2 L7.8 8.0 L1.2 14.8" fill="none" stroke="#6c707e" stroke-width="2.2" stroke-linecap="round" stroke-linejoin="round"/></svg>
<svg style="left:851px;top:932px;" width="22" height="30" viewBox="0 0 22 30"><rect x="2" y="1.4" width="18.6" height="7" rx="2" fill="#fdf8e8" stroke="#c98a1f" stroke-width="1.9"/><rect x="2" y="11.4" width="18.6" height="7" rx="2" fill="#fdf8e8" stroke="#c98a1f" stroke-width="1.9"/><rect x="2" y="21.4" width="18.6" height="7" rx="2" fill="#fdf8e8" stroke="#c98a1f" stroke-width="1.9"/></svg>
<div class="t" id="t34" style="left:885px;top:930.57px;font-size:27px;line-height:30.16px;color:#6f2d2d;">o</div>
<div class="t" id="t35" style="left:909.4px;top:930.57px;font-size:27px;line-height:30.16px;color:#000;">=</div>
<div class="t" id="v1v" style="left:931px;top:930.57px;font-size:27px;line-height:30.16px;color:#6c707e;letter-spacing:0.097px;">{Entitybus@9921}</div>
<svg style="left:848px;top:980px;" width="28" height="30" viewBox="0 0 28 30"><text x="14" y="11.5" text-anchor="middle" font-family="Liberation Sans" font-weight="700" font-size="15.5" fill="#6c707e" letter-spacing="0.5">10</text><text x="13.5" y="27" text-anchor="middle" font-family="Liberation Sans" font-weight="700" font-size="15.5" fill="#6c707e" letter-spacing="0.5">01</text></svg>
<div class="t" id="v2n" style="left:885px;top:978.57px;font-size:27px;line-height:30.16px;color:#6f2d2d;letter-spacing:0.234px;">num</div>
<div class="t" id="t36" style="left:946px;top:978.57px;font-size:27px;line-height:30.16px;color:#000;">=</div>
<div class="t" id="t37" style="left:970px;top:978.57px;font-size:27px;line-height:30.16px;color:#000;">9</div>
<svg style="left:814px;top:1034px;" width="9" height="16" viewBox="0 0 9 16"><path d="M1.2 1.2 L7.8 8.0 L1.2 14.8" fill="none" stroke="#6c707e" stroke-width="2.2" stroke-linecap="round" stroke-linejoin="round"/></svg>
<svg style="left:844px;top:1030px;" width="36" height="24" viewBox="0 0 36 24"><g fill="none" stroke="#9aa7b0" stroke-width="3"><circle cx="9" cy="12.5" r="6"/><circle cx="27" cy="12.5" r="6"/><path d="M15 11 Q18 9 21 11"/></g></svg>
<div class="t" id="v3n" style="left:885px;top:1026.57px;font-size:27px;line-height:30.16px;color:#6f2d2d;letter-spacing:0.41px;">entitybusRepository</div>
<div class="t" id="t38" style="left:1140px;top:1026.57px;font-size:27px;line-height:30.16px;color:#000;">=</div>
<div class="t" id="v3v" style="left:1163px;top:1026.57px;font-size:27px;line-height:30.16px;color:#6c707e;letter-spacing:0.389px;">{$Proxy96@9923}</div>
<div class="clip" style="left:1390px;top:1018px;width:742px;height:48px"><div class="a" style="left:-1390px;top:-1018px;width:2214px;height:1340px">
<div class="t" id="t39" style="left:1398px;top:1026.57px;font-size:27px;line-height:30.16px;color:#000;letter-spacing:0.42px;">&quot;org.springframework.data.jpa.repository.support.SimpleJpaRepository@9924&quot;</div>
</div></div>
<div class="a" style="left:28px;top:1301px;width:16px;height:16px;background:#e7effd;border:2.2px solid #3574f0;border-radius:4px"></div>
<div class="t" id="sb0" style="left:52.4px;top:1293.57px;font-size:27px;line-height:30.16px;color:#6a6e7c;letter-spacing:0.288px;">SpringBootDockerDemoDebug</div>
<svg style="left:448px;top:1301px;" width="9" height="16" viewBox="0 0 9 16"><path d="M1.2 1.2 L7.8 8.0 L1.2 14.8" fill="none" stroke="#8c909e" stroke-width="2" stroke-linecap="round" stroke-linejoin="round"/></svg>
<svg style="left:534.8px;top:1301px;" width="9" height="16" viewBox="0 0 9 16"><path d="M1.2 1.2 L7.8 8.0 L1.2 14.8" fill="none" stroke="#8c909e" stroke-width="2" stroke-linecap="round" stroke-linejoin="round"/></svg>
<svg style="left:641.4px;top:1301px;" width="9" height="16" viewBox="0 0 9 16"><path d="M1.2 1.2 L7.8 8.0 L1.2 14.8" fill="none" stroke="#8c909e" stroke-width="2" stroke-linecap="round" stroke-linejoin="round"/></svg>
<svg style="left:740.7px;top:1301px;" width="9" height="16" viewBox="0 0 9 16"><path d="M1.2 1.2 L7.8 8.0 L1.2 14.8" fill="none" stroke="#8c909e" stroke-width="2" stroke-linecap="round" stroke-linejoin="round"/></svg>
<svg style="left:838px;top:1301px;" width="9" height="16" viewBox="0 0 9 16"><path d="M1.2 1.2 L7.8 8.0 L1.2 14.8" fill="none" stroke="#8c909e" stroke-width="2" stroke-linecap="round" stroke-linejoin="round"/></svg>
<div class="t" id="sb1" style="left:478.8px;top:1293.57px;font-size:27px;line-height:30.16px;color:#6a6e7c;letter-spacing:0.354px;">src</div>
<div class="t" id="sb2" style="left:564.8px;top:1293.57px;font-size:27px;line-height:30.16px;color:#6a6e7c;letter-spacing:0.065px;">main</div>
<div class="t" id="sb3" style="left:672px;top:1293.57px;font-size:27px;line-height:30.16px;color:#6a6e7c;letter-spacing:-0.838px;">java</div>
<div class="t" id="sb4" style="left:769.7px;top:1293.57px;font-size:27px;line-height:30.16px;color:#6a6e7c;letter-spacing:0.831px;">rest</div>
<svg style="left:867px;top:1295px;" width="30" height="30" viewBox="0 0 30 30"><circle cx="15" cy="15" r="12.8" fill="none" stroke="#3574f0" stroke-width="2.4"/><path d="M19.3 10.6 A6.2 6.2 0 1 0 19.3 19.4" fill="none" stroke="#3574f0" stroke-width="2.3" stroke-linecap="round"/></svg>
<div class="t" id="sb5" style="left:906px;top:1293.57px;font-size:27px;line-height:30.16px;color:#6a6e7c;letter-spacing:0.549px;">EntitybusController</div>
<div class="t" id="sb6" style="left:1539px;top:1293.57px;font-size:27px;line-height:30.16px;color:#6a6e7c;letter-spacing:-0.678px;">27:1</div>
<div class="t" id="sb7" style="left:1620.6px;top:1293.57px;font-size:27px;line-height:30.16px;color:#6a6e7c;letter-spacing:-0.616px;">LF</div>
<div class="t" id="sb8" style="left:1682px;top:1293.57px;font-size:27px;line-height:30.16px;color:#6a6e7c;letter-spacing:1.131px;">UTF-8</div>
<div class="t" id="sb9" style="left:1795px;top:1293.57px;font-size:27px;line-height:30.16px;color:#6a6e7c;letter-spacing:0.262px;">4 spaces</div>
<svg style="left:1940px;top:1294px;" width="34" height="32" viewBox="0 0 34 32"><g fill="none" stroke="#6c707e" stroke-width="2.4" stroke-linecap="round" stroke-linejoin="round"><rect x="4.5" y="15" width="18" height="13" rx="3"/><path d="M13.5 19.5 V23.5"/><path d="M19 15 V10 Q19 4.5 24.5 4.5 Q30 4.5 30 10 V11.5"/></g></svg>
<div class="a" style="left:1986px;top:1282px;width:160px;height:58px;background:#ccd7ec;"></div>
<div class="a" style="left:2146px;top:1282px;width:48px;height:58px;background:#dfe1e5;"></div>
<div class="t" id="sb10" style="left:1996px;top:1293.57px;font-size:27px;line-height:30.16px;color:#6a6e7c;letter-spacing:0.613px;">6357 of 8192M</div>
</div></body></html>
